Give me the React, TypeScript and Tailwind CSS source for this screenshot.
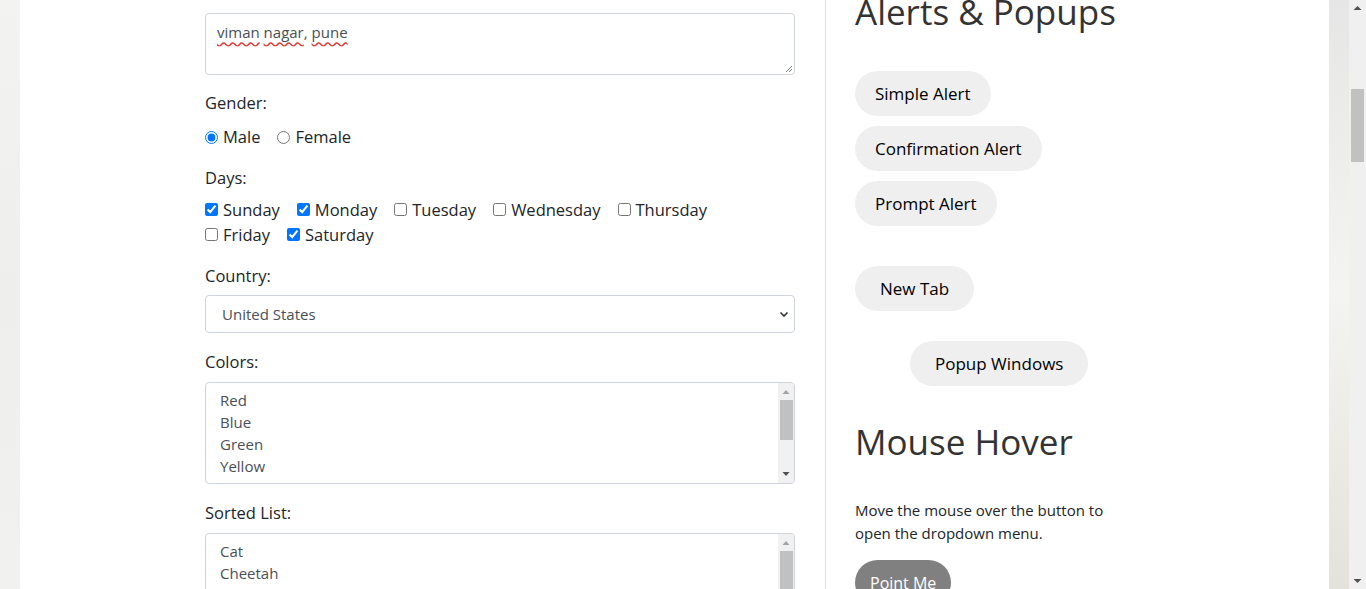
import React from 'react';

const font = { fontFamily: '"Open Sans", "Noto Sans", sans-serif' };

const days = [
  { name: 'Sunday', checked: true },
  { name: 'Monday', checked: true },
  { name: 'Tuesday', checked: false },
  { name: 'Wednesday', checked: false },
  { name: 'Thursday', checked: false },
  { name: 'Friday', checked: false },
  { name: 'Saturday', checked: true },
];

const ListScrollbar: React.FC = () => (
  <div className="flex w-[16px] flex-col items-center bg-[#f1f1f1]">
    <svg width="16" height="17" viewBox="0 0 16 17" className="shrink-0">
      <path d="M4.5 11 L8 7 L11.5 11 Z" fill="#a3a3a3" />
    </svg>
    <div className="h-[40px] w-[13px] bg-[#c1c1c1]" />
    <div className="flex-1" />
    <svg width="16" height="17" viewBox="0 0 16 17" className="shrink-0">
      <path d="M4.5 6 L8 10 L11.5 6 Z" fill="#505050" />
    </svg>
  </div>
);

const ListBox: React.FC<{ items: string[]; height: string }> = ({ items, height }) => (
  <div className={`flex ${height} overflow-hidden rounded-[4px] border border-[#ced4da] bg-white`}>
    <div className="flex-1 overflow-hidden px-[14px] pt-[6px] text-[15px] leading-[22px] text-[#495057]">
      {items.map((it) => (
        <div key={it}>{it}</div>
      ))}
    </div>
    <ListScrollbar />
  </div>
);

const PillButton: React.FC<{ label: string; className?: string }> = ({ label, className = '' }) => (
  <button
    className={`h-[45px] rounded-full bg-[#efefef] text-[17px] text-black ${className}`}
  >
    {label}
  </button>
);

const App: React.FC = () => {
  return (
    <div className="flex h-[589px] w-[1366px] overflow-hidden" style={font}>
      {/* blurred page background, left edge */}
      <div className="w-[20px] shrink-0 bg-gradient-to-b from-[#f3f3f1] via-[#eeeeec] to-[#f1f1ef]" />

      <div className="flex flex-1 bg-white">
        {/* left column: form */}
        <div className="w-[805px] shrink-0 pl-[185px] pt-[13px] text-[#212529]">
          <div className="w-[590px]">
            <div className="relative h-[62px] rounded-[4px] border border-[#ced4da] px-[11px] pt-[7px] text-[15px] text-[#495057]">
              <span className="underline decoration-[#e53935] decoration-wavy underline-offset-[3px]">viman</span>{' '}
              <span className="underline decoration-[#e53935] decoration-wavy underline-offset-[3px]">nagar</span>,{' '}
              <span className="underline decoration-[#e53935] decoration-wavy underline-offset-[3px]">pune</span>
              <svg width="8" height="8" viewBox="0 0 8 8" className="absolute bottom-[1px] right-[1px]">
                <path d="M7 1 L1 7 M7 4 L4 7" stroke="#7a7a7a" strokeWidth="1" />
              </svg>
            </div>

            <div className="mt-[16px] text-[16.5px] leading-[24px]">Gender:</div>
            <div className="mt-[10px] flex items-center text-[16.5px] leading-[24px]">
              <label className="flex items-center">
                <input type="radio" name="g" defaultChecked className="m-0 h-[13px] w-[13px]" />
                <span className="ml-[5px]">Male</span>
              </label>
              <label className="ml-[17px] flex items-center">
                <input type="radio" name="g" className="m-0 h-[13px] w-[13px]" />
                <span className="ml-[5px]">Female</span>
              </label>
            </div>

            <div className="mt-[17px] text-[16.5px] leading-[24px]">Days:</div>
            <div className="mt-[7px] flex w-[540px] flex-wrap text-[16.5px] leading-[25px]">
              {days.map((d) => (
                <label key={d.name} className="mr-[17px] flex items-center">
                  <input type="checkbox" defaultChecked={d.checked} className="m-0 h-[13px] w-[13px]" />
                  <span className="ml-[5px]">{d.name}</span>
                </label>
              ))}
            </div>

            <div className="mt-[17px] text-[16.5px] leading-[24px]">Country:</div>
            <div className="relative mt-[7px] flex h-[38px] items-center rounded-[4px] border border-[#ced4da] px-[16px] text-[15px] text-[#495057]">
              United States
              <svg width="10" height="7" viewBox="0 0 10 7" className="absolute right-[5px] top-[15px]">
                <path d="M1.5 1.5 L5 5 L8.5 1.5" stroke="#333" strokeWidth="1.6" fill="none" />
              </svg>
            </div>

            <div className="mt-[17px] text-[16.5px] leading-[24px]">Colors:</div>
            <div className="mt-[8px]">
              <ListBox items={['Red', 'Blue', 'Green', 'Yellow', 'Red']} height="h-[102px]" />
            </div>

            <div className="mt-[17px] text-[16.5px] leading-[24px]">Sorted List:</div>
            <div className="mt-[8px]">
              <ListBox items={['Cat', 'Cheetah', 'Dog', 'Fox']} height="h-[102px]" />
            </div>
          </div>
        </div>

        {/* right column */}
        <div className="flex-1 border-l border-[#dcdcdc] pl-[29px] text-[#333]">
          <h2 className="-mt-[12px] text-[35px] leading-[48px]">Alerts &amp; Popups</h2>
          <div className="mt-[35px] flex flex-col items-start gap-[10px]">
            <PillButton label="Simple Alert" className="px-[20px]" />
            <PillButton label="Confirmation Alert" className="px-[20px]" />
            <PillButton label="Prompt Alert" className="px-[20px]" />
          </div>
          <div className="mt-[40px]">
            <PillButton label="New Tab" className="px-[25px]" />
          </div>
          <div className="mt-[30px] pl-[55px]">
            <PillButton label="Popup Windows" className="px-[25px]" />
          </div>
          <h2 className="mt-[32px] text-[35px] leading-[48px]">Mouse Hover</h2>
          <p className="mt-[33px] w-[280px] text-[15px] leading-[23px] text-[#212529]">
            Move the mouse over the button to open the dropdown menu.
          </p>
          <button className="mt-[15px] h-[45px] rounded-full bg-[#808080] px-[15px] text-[16px] text-white">
            Point Me
          </button>
        </div>
      </div>

      {/* blurred page background, right edge */}
      <div className="w-[20px] shrink-0 bg-gradient-to-b from-[#e6e6e6] via-[#f4f4f0] to-[#e4e2dc]" />

      {/* page scrollbar */}
      <div className="flex w-[17px] shrink-0 flex-col items-center bg-[#f0f0f0]">
        <svg width="17" height="17" viewBox="0 0 17 17" className="shrink-0">
          <path d="M4.5 10 L8.5 6 L12.5 10 Z" fill="#505050" />
        </svg>
        <div className="mt-[72px] h-[73px] w-[13px] bg-[#c1c1c1]" />
        <div className="flex-1" />
        <svg width="17" height="17" viewBox="0 0 17 17" className="shrink-0">
          <path d="M4.5 7 L8.5 11 L12.5 7 Z" fill="#505050" />
        </svg>
      </div>
    </div>
  );
};

export default App;
